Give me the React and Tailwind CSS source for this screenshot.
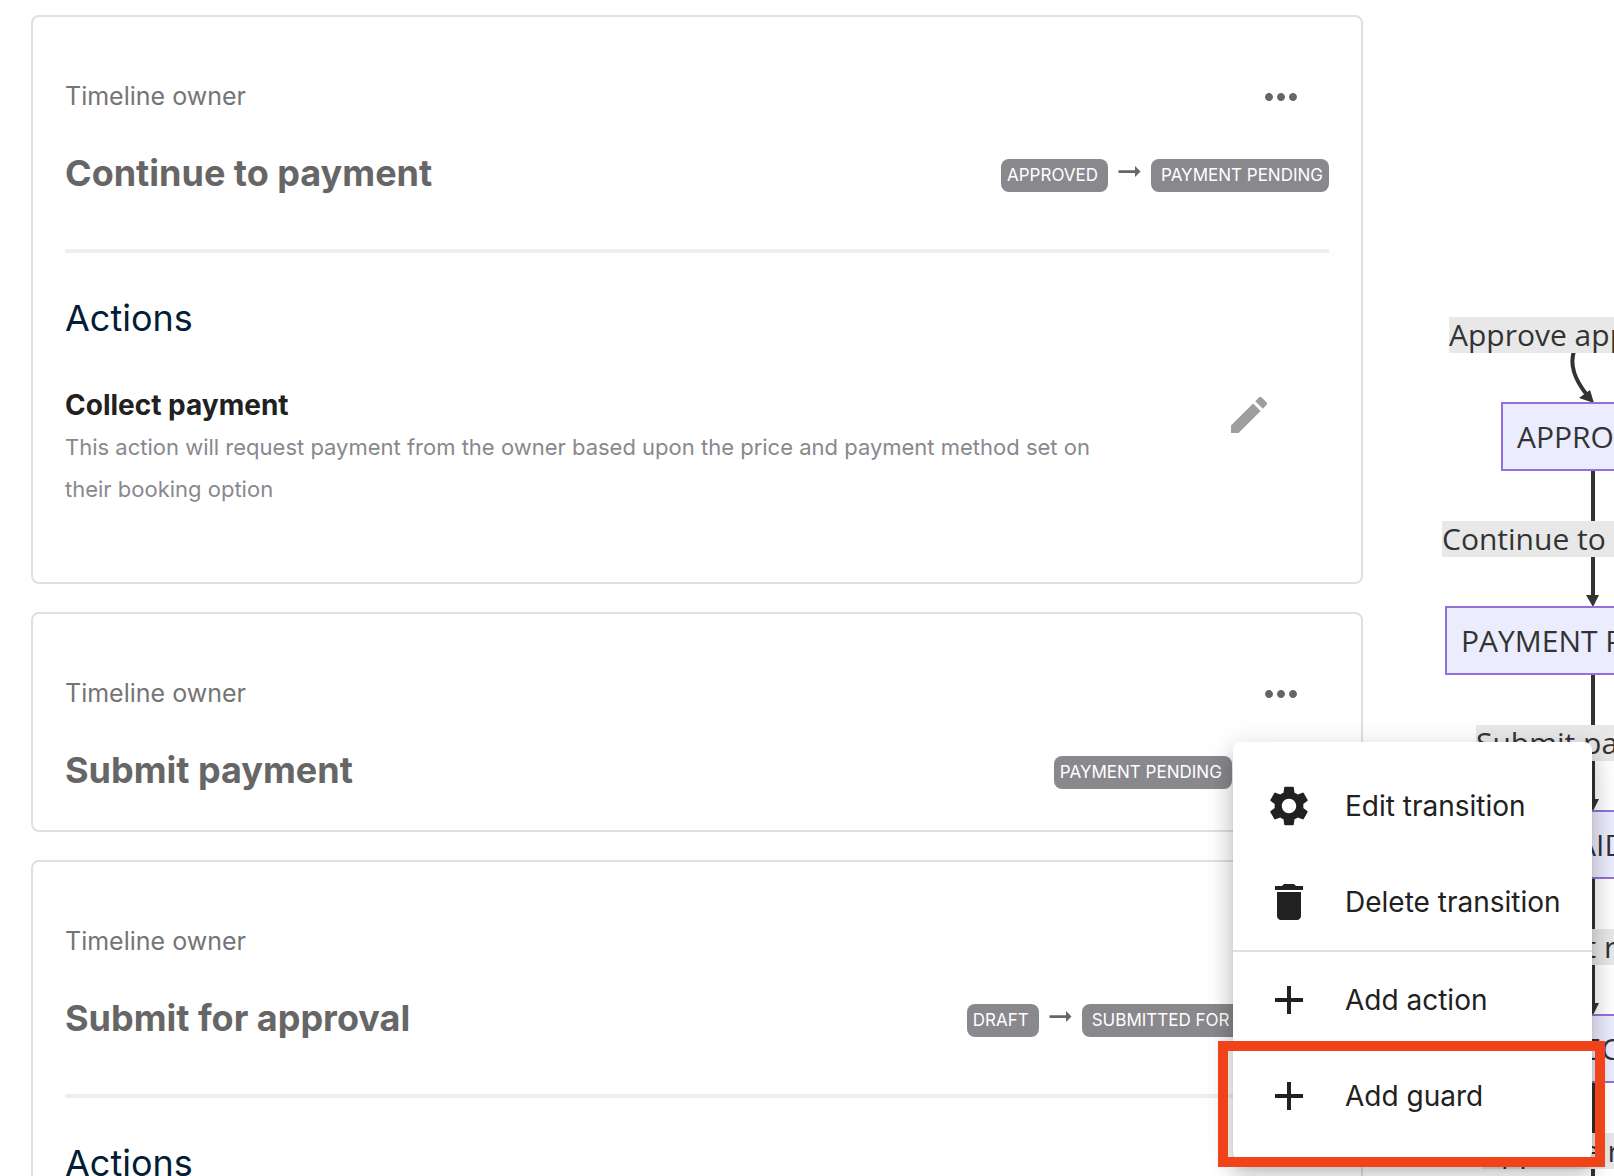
import React from 'react';
import { MdAdd, MdDelete, MdEdit, MdMoreHoriz, MdSettings } from 'react-icons/md';

const transitions = [
  {
    name: 'Continue to payment',
    from: 'APPROVED',
    to: 'PAYMENT PENDING',
    actions: [
      {
        name: 'Collect payment',
        description:
          'This action will request payment from the owner based upon the price and payment method set on their booking option',
      },
    ],
  },
  { name: 'Submit payment', from: 'PAYMENT PENDING', to: 'PAID', actions: [], menuOpen: true },
  {
    name: 'Submit for approval',
    from: 'DRAFT',
    to: 'SUBMITTED FOR APPROVAL',
    actions: [],
    showActions: true,
  },
];

const MenuItem = ({ icon: Icon, label, highlighted }) => (
  <li role="none" className="relative">
    <button role="menuitem" className="flex h-24 w-full items-center gap-8 px-8 text-left text-[28px] text-[#212121]">
      <Icon className="size-12 shrink-0" />
      <span className="whitespace-nowrap">{label}</span>
    </button>
    {highlighted && (
      <div className="pointer-events-none absolute -top-[7px] -right-[13px] -bottom-[23px] -left-[15px] border-10 border-[#f1431a]" />
    )}
  </li>
);

const TransitionMenu = () => (
  <ul
    role="menu"
    className="absolute top-[72px] -right-[287px] z-50 w-[359px] rounded-lg bg-white py-4 shadow-[0_10px_10px_-6px_rgba(0,0,0,0.2),0_16px_20px_2px_rgba(0,0,0,0.14),0_6px_28px_4px_rgba(0,0,0,0.12)]"
  >
    <MenuItem icon={MdSettings} label="Edit transition" />
    <MenuItem icon={MdDelete} label="Delete transition" />
    <li role="separator" className="h-[2px] bg-[#e0e0e0]" />
    <MenuItem icon={MdAdd} label="Add action" />
    <MenuItem icon={MdAdd} label="Add guard" highlighted />
  </ul>
);

const Arrow = () => (
  <svg viewBox="0 0 24 24" className="mx-[5px] mb-2 size-[33px] text-[#666]" fill="currentColor" aria-hidden="true">
    <path d="M16.01 11H4v2h12.01v3L20 12l-3.99-4z" />
  </svg>
);

const StateFlow = ({ from, to }) => (
  <div className="flex shrink-0 items-center pt-1 text-[17px] leading-[33px] whitespace-nowrap text-white">
    <span className="rounded-lg bg-[#89888d] pr-2.5 pl-1.5">{from}</span>
    <Arrow />
    <span className="rounded-lg bg-[#89888d] pr-1.5 pl-2.5">{to}</span>
  </div>
);

const ActionRow = ({ name, description }) => (
  <div className="mt-[42px] flex items-start">
    <div className="mr-24 flex-1">
      <h4 className="text-[28px] leading-[42px] font-bold text-[#212121]">{name}</h4>
      <p className="text-[22px] leading-[42px] text-[#89888d]">{description}</p>
    </div>
    <button aria-label={`Edit ${name}`} className="mt-[7px] mr-14 text-[#9e9e9e]">
      <MdEdit className="size-12" />
    </button>
  </div>
);

const TransitionCard = ({ name, from, to, actions, showActions, menuOpen }) => (
  <section className="rounded-lg border-2 border-[#e0e0e0] bg-white px-8 pt-14">
    <div className="flex h-12 items-center justify-between">
      <p className="text-[25px] text-[#757575]">Timeline owner</p>
      <div className="relative mr-6">
        <button aria-label="Transition options" className="block text-[#666]">
          <MdMoreHoriz className="size-12" />
        </button>
        {menuOpen && <TransitionMenu />}
      </div>
    </div>
    <div className="mt-7 mb-9 flex h-12 items-center justify-between">
      <h2 className="text-[36px] leading-[44px] font-bold text-[#666]">{name}</h2>
      <StateFlow from={from} to={to} />
    </div>
    {(showActions || actions.length > 0) && (
      <div className="mt-[52px] border-t-4 border-[#eee] pt-[41px] pb-[72px]">
        <h3 className="text-[36px] leading-[48px] text-[#031d36]">Actions</h3>
        {actions.map((action) => (
          <ActionRow key={action.name} {...action} />
        ))}
      </div>
    )}
  </section>
);

const EdgeLabel = ({ className, children }) => (
  <span className={`absolute bg-[#e8e8e8] leading-9 ${className}`}>{children}</span>
);

const StateNode = ({ className, children }) => (
  <div
    className={`absolute flex h-[69px] items-center border-2 border-[#9370db] bg-[#ececff] px-[14px] ${className}`}
  >
    {children}
  </div>
);

const StateDiagram = () => (
  <aside className="relative w-[251px] shrink-0 overflow-hidden font-['Open_Sans',sans-serif] text-[30px] font-medium whitespace-nowrap text-[#333]">
    <svg width="400" height="1176" className="absolute top-0 left-0" fill="none" stroke="#333" strokeWidth="4">
      <path d="M211 351C206 366 212 380 224 395" />
      <path d="M230 471V600M230 675V804M230 879V1008M230 1083V1176" />
      <g fill="#333" stroke="none">
        <path d="M231 403L216 398L227 390Z" />
        <path d="M223 595H236L230 607Z" />
        <path d="M223 799H236L230 811Z" />
        <path d="M223 1003H236L230 1015Z" />
      </g>
    </svg>
    <EdgeLabel className="top-[317px] left-[86px]">Approve application</EdgeLabel>
    <StateNode className="top-[402px] left-[138px]">APPROVED</StateNode>
    <EdgeLabel className="top-[521px] left-[79px]">Continue to payment</EdgeLabel>
    <StateNode className="top-[606px] left-[82px]">PAYMENT PENDING</StateNode>
    <EdgeLabel className="top-[725px] left-[113px]">Submit payment</EdgeLabel>
    <StateNode className="top-[810px] left-[180px]">PAID</StateNode>
    <EdgeLabel className="top-[929px] left-[134px]">Submit review</EdgeLabel>
    <StateNode className="top-[1014px] left-[162px]">REJECT</StateNode>
    <EdgeLabel className="top-[1133px] left-[119px]">Approve review</EdgeLabel>
  </aside>
);

export default function App() {
  return (
    <div className="flex h-screen overflow-hidden bg-white font-['Inter',sans-serif]">
      <main className="relative z-10 flex min-w-0 flex-1 flex-col gap-7 pt-[15px] pl-[31px]">
        {transitions.map((transition) => (
          <TransitionCard key={transition.name} {...transition} />
        ))}
      </main>
      <StateDiagram />
    </div>
  );
}
